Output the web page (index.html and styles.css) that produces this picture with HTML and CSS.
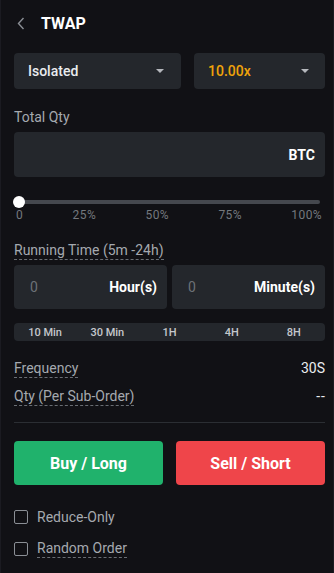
FILE: index.html
```html
<!DOCTYPE html>
<html>
<head>
<meta charset="utf-8">
<link rel="stylesheet" href="styles.css">
</head>
<body>
<div class="panel">
  <div class="header">
    <svg class="back" width="8" height="13" viewBox="0 0 8 13"><path d="M6.5 1 L1.5 6.5 L6.5 12" fill="none" stroke="#8a8e94" stroke-width="1.4"/></svg>
    <span class="title">TWAP</span>
  </div>

  <div class="selects">
    <div class="select wide"><span>Isolated</span><span class="caret"></span></div>
    <div class="select"><span class="orange">10.00x</span><span class="caret"></span></div>
  </div>

  <div class="label qty-label">Total Qty</div>
  <div class="input big"><span class="unit">BTC</span></div>

  <div class="slider">
    <div class="track"><div class="thumb"></div></div>
    <div class="ticks"><span>0</span><span>25%</span><span>50%</span><span>75%</span><span>100%</span></div>
  </div>

  <div class="label dashed rt">Running Time (5m -24h)</div>
  <div class="times">
    <div class="input"><span class="ph">0</span><span class="unit">Hour(s)</span></div>
    <div class="input"><span class="ph">0</span><span class="unit">Minute(s)</span></div>
  </div>
  <div class="quick"><span>10 Min</span><span>30 Min</span><span>1H</span><span>4H</span><span>8H</span></div>

  <div class="info">
    <div class="row"><span class="label dashed">Frequency</span><span class="val">30S</span></div>
    <div class="row"><span class="label dashed">Qty (Per Sub-Order)</span><span class="val dashes">--</span></div>
  </div>
  <div class="divider"></div>

  <div class="buttons">
    <div class="btn buy">Buy / Long</div>
    <div class="btn sell">Sell / Short</div>
  </div>

  <div class="checks">
    <div class="check"><span class="box"></span><span class="clabel">Reduce-Only</span></div>
    <div class="check"><span class="box"></span><span class="clabel dashed">Random Order</span></div>
  </div>
</div>
</body>
</html>
```
FILE: styles.css
```css
* { box-sizing: border-box; }
html, body { margin: 0; padding: 0; background: #111115; }
body { font-family: Roboto, "Noto Sans", sans-serif; color: #eaecef; }
.panel {
  width: 334px; height: 573px; background: #111115;
  border-left: 1px solid #1b1b21; border-right: 1px solid #1b1b21;
  padding: 0 8px 0 13px;
}
.header { display: flex; align-items: center; height: 47px; padding-left: 3px; }
.back { display: block; }
.title { margin-left: 16px; font-size: 16px; font-weight: 700; color: #fff; }
.selects { display: flex; gap: 13px; margin-top: 6px; }
.select {
  height: 36px; border-radius: 4px; background: #24272c;
  display: flex; align-items: center; justify-content: space-between;
  padding: 0 16px 0 14px; font-size: 14px; font-weight: 500; color: #eaecef; flex: 1 1 0;
}
.select.wide { flex: 0 0 167px; padding-right: 17px; }
.orange { color: #f0a30a; }
.caret { width: 0; height: 0; border-left: 4px solid transparent; border-right: 4px solid transparent; border-top: 4px solid #b5b8bd; }
.label { font-size: 14px; color: #a5a9af; line-height: 16px; }
.qty-label { margin-top: 20px; }
.dashed { border-bottom: 1px dashed #6a6e74; display: inline-block; padding-bottom: 1px; line-height: 16px; }
.input {
  background: #24272c; border-radius: 4px; display: flex; align-items: center;
  justify-content: space-between; padding: 0 10px 0 16px;
}
.input.big { height: 45px; margin-top: 7px; justify-content: flex-end; }
.unit { font-size: 14px; font-weight: 700; color: #fff; }
.ph { font-size: 14px; color: #6d7177; }
.slider { margin-top: 23px; }
.track { height: 4px; background: #45484e; border-radius: 2px; position: relative; margin: 0 5px; }
.thumb { position: absolute; left: -6px; top: -4px; width: 12px; height: 12px; border-radius: 50%; background: #fff; }
.ticks { display: flex; justify-content: space-between; margin-top: 5px; padding-left: 2px; margin-right: 3px; font-size: 12px; letter-spacing: 0.4px; line-height: 13px; color: #74787e; }
.rt { margin-top: 20px; }
.times { display: flex; gap: 5px; margin-top: 5px; }
.times .input { flex: 1; height: 44px; }
.quick {
  margin-top: 14px; height: 18px; background: #24272c; border-radius: 4px;
  display: grid; grid-template-columns: repeat(5, 1fr); align-items: center;
  font-size: 11px; font-weight: 500; color: #c4c7cc; text-align: center;
}
.info { margin-top: 19px; display: flex; flex-direction: column; gap: 10px; }
.row { display: flex; justify-content: space-between; align-items: flex-start; }
.val { font-size: 14px; color: #eaecef; line-height: 16px; }
.dashes { letter-spacing: 1px; margin-right: -1px; }
.divider { height: 1px; background: #2b2e33; margin-top: 16px; }
.buttons { display: flex; gap: 13px; margin-top: 18px; }
.btn { flex: 1; height: 44px; border-radius: 4px; display: flex; align-items: center; justify-content: center; font-size: 16px; font-weight: 700; color: #fff; }
.buy { background: #20b26c; }
.sell { background: #ef454a; }
.checks { margin-top: 24px; display: flex; flex-direction: column; gap: 15px; }
.check { display: flex; align-items: center; gap: 9px; }
.box { width: 14px; height: 14px; border: 1px solid #8b8f95; border-radius: 2px; }
.clabel { font-size: 14px; color: #a5a9af; line-height: 16px; }
```
